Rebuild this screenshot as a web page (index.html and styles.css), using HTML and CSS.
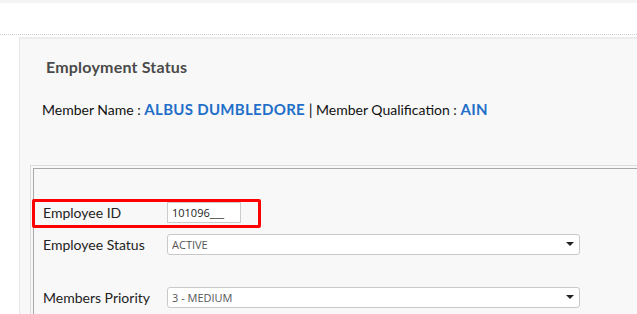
FILE: index.html
```html
<!DOCTYPE html>
<html lang="en">
<head>
    <meta charset="UTF-8">
    <meta name="viewport" content="width=device-width, initial-scale=1.0">
    <title>Employment Status</title>
    <link rel="stylesheet" href="styles.css">
</head>
<body>
    <div class="topbar"></div>
    <div class="header"></div>

    <div class="main">
        <div class="panel">
            <h3 class="panel-title">Employment Status</h3>

            <p class="member-line">
                Member Name : <span class="member-value">ALBUS DUMBLEDORE</span> <span class="sep">|</span> Member Qualification : <span class="member-value">AIN</span>
            </p>

            <!-- Formulaire statut -->
            <div class="status-frame">
                <div class="status-box">
                    <div class="form-row highlight">
                        <label for="employeeId">Employee ID</label>
                        <input type="text" id="employeeId" value="101096___">
                    </div>
                    <div class="form-row">
                        <label for="employeeStatus">Employee Status</label>
                        <div class="select-wrap">
                            <select id="employeeStatus">
                                <option>ACTIVE</option>
                                <option>INACTIVE</option>
                            </select>
                        </div>
                    </div>
                    <div class="form-row priority-row">
                        <label for="membersPriority">Members Priority</label>
                        <div class="select-wrap">
                            <select id="membersPriority">
                                <option>3 - MEDIUM</option>
                                <option>1 - HIGH</option>
                                <option>5 - LOW</option>
                            </select>
                        </div>
                    </div>
                </div>
            </div>
        </div>
    </div>
</body>
</html>
```

FILE: styles.css
```css
html,
body {
    height: 100%;
}

body {
    font-family: Lato, "Open Sans", sans-serif;
    background-color: #ffffff;
    color: #222;
    margin: 0;
    padding: 0;
    overflow: hidden;
    display: flex;
    flex-direction: column;
}

.topbar {
    height: 3px;
    background-color: #f4f4f4;
}

.header {
    height: 31px;
    border-bottom: 1px dotted #cfcfcf;
}

.main {
    flex: 1;
    display: flex;
    padding: 2px 0 0 19px;
}

.panel {
    flex: 1;
    display: flex;
    flex-direction: column;
    background-color: #f8f8f8; /* gris très clair */
    border-top: 2px solid #ececec;
    border-left: 1px solid #e6e6e6;
    padding: 18px 0 0 13px;
}

.panel-title {
    margin: 0 0 0 13px;
    font-size: 16px;
    line-height: 19px;
    font-weight: bold;
    letter-spacing: 0.2px;
    color: #4a4a4a;
}

.member-line {
    margin: 24px 0 0 9px;
    font-size: 14px;
    line-height: 18px;
    color: #111;
}

.member-value {
    color: #1f6fc8;
    font-weight: bold;
    font-size: 15px;
    letter-spacing: 0.3px;
}

.sep {
    font-size: 15px;
}

.status-frame {
    flex: 1;
    display: flex;
    margin-top: 46px;
    border-top: 1px solid #dcdcdc;
    border-left: 1px solid #dcdcdc;
    padding: 2px 0 0 2px;
    margin-left: -3px;
}

.status-box {
    flex: 1;
    border-top: 1px solid #a8a8a8;
    border-left: 1px solid #a8a8a8;
    padding-top: 30px;
}

.form-row {
    display: flex;
    align-items: center;
    padding-left: 9px;
    margin-top: 5px;
}

.form-row label {
    width: 124px;
    font-size: 14px;
    color: #222;
}

.form-row.highlight {
    width: 201px;
    margin: 0 0 0 -2px;
    padding: 0 14px 2px 8px;
    border: 3px solid #ff0000;
    border-radius: 2px;
    height: 21px;
}

.priority-row {
    margin-top: 31px;
}

input[type="text"] {
    width: 74px;
    height: 21px;
    box-sizing: border-box;
    border: 1px solid #cccccc;
    background: #ffffff;
    padding: 0 4px;
    font-family: "Open Sans", sans-serif;
    font-size: 11px;
    color: #222;
}

.select-wrap {
    position: relative;
    width: 413px;
}

.select-wrap::after {
    content: "";
    position: absolute;
    right: 6px;
    top: 9px;
    border-left: 4px solid transparent;
    border-right: 4px solid transparent;
    border-top: 4px solid #222;
    pointer-events: none;
}

select {
    -webkit-appearance: none;
    appearance: none;
    width: 100%;
    height: 21px;
    border: 1px solid #c9c9c9;
    border-radius: 3px;
    background: #ffffff;
    padding: 0 4px;
    font-family: "Open Sans", sans-serif;
    font-size: 11px;
    color: #555;
}
```
